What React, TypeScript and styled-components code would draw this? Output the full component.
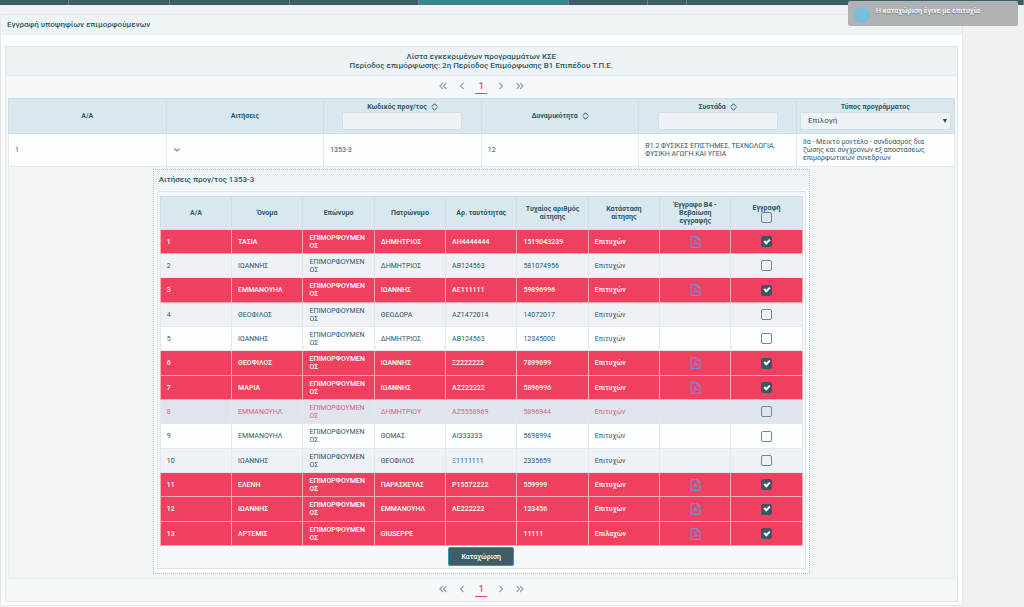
import React, { useState } from "react";
import styled, { createGlobalStyle, css } from "styled-components";

const ink = "#2b5a68";
const pink = "#f04060";

const GlobalStyle = createGlobalStyle`
  *, *::before, *::after { box-sizing: border-box; }
  body {
    margin: 0;
    background: #f0f1f5;
    color: ${ink};
    font-family: Roboto, "Open Sans", "Liberation Sans", sans-serif;
    font-size: 7px;
    line-height: 8px;
  }
  input, select, button { font-family: inherit; color: inherit; }
`;

const MenuBar = styled.nav`
  display: flex;
  height: 5px;
  background: #3f5d66;
`;

const MenuItem = styled.a<{ $grow: number; $active?: boolean }>`
  flex: ${(p) => p.$grow} 1 0;
  border-right: 1px solid #6a838b;
  background: ${(p) => (p.$active ? "#38878f" : "transparent")};
`;

const Toast = styled.div`
  position: fixed;
  top: 1px;
  right: 6px;
  z-index: 2;
  display: flex;
  gap: 6px;
  width: 170px;
  height: 25px;
  padding: 6px;
  border-radius: 2px;
  background: #b0b1b3;
  color: #fff;
  text-shadow: 0 1px 1px #777;
  font-weight: 500;
`;

const Page = styled.main`
  width: 94%;
  margin: 9px 0 0;
  padding-bottom: 3px;
  border: 1px solid #e3e8ec;
  background: #fdfefe;
`;

const PageTitle = styled.h1`
  margin: 0 0 11px;
  padding: 5px 6px;
  background: #eef3f6;
  font-size: 8px;
  line-height: 10px;
  font-weight: 500;
`;

const List = styled.section`
  margin: 0 4px;
  border: 1px solid #dde5ea;
  background: #f6f9fc;
`;

const ListTitle = styled.h2`
  margin: 0;
  padding: 5px;
  border-bottom: 1px solid #e4eaee;
  background: #edf2f5;
  font-size: 8px;
  line-height: 9px;
  font-weight: 500;
  text-align: center;
`;

const PagerBar = styled.nav`
  display: flex;
  justify-content: center;
  align-items: center;
  height: 22px;
  padding-bottom: 2px;
`;

const PagerButton = styled.button<{ $current?: boolean }>`
  display: grid;
  place-items: center;
  width: 19px;
  height: 15px;
  padding: 0;
  border: 0;
  background: none;
  color: #8fa3a9;
  font-size: 9px;
  ${(p) =>
    p.$current &&
    css`
      width: 12px;
      margin: 0 4px;
      border-bottom: 1px solid ${pink};
      color: ${pink};
      font-weight: 500;
    `}
`;

const Grid = styled.table`
  width: 100%;
  table-layout: fixed;
  border-collapse: collapse;
`;

const Outer = styled.div`
  padding: 0 2px;
`;

const Head = styled.th<{ $compact?: boolean }>`
  height: ${(p) => (p.$compact ? 33 : 35)}px;
  padding: 0 ${(p) => (p.$compact ? 6 : 3)}px;
  border: 1px solid #cfdfe6;
  background: #d9e7ef;
  font-weight: 700;
  text-align: center;
`;

const HeadLabel = styled.label`
  display: flex;
  justify-content: center;
  align-items: center;
  gap: 4px;
`;

const FilterInput = styled.input`
  width: 120px;
  max-width: 100%;
  height: 18px;
  margin-top: 1px;
  border: 1px solid #d3dfe6;
  background: #eef2f6;
`;

const SelectBox = styled.div`
  position: relative;
  margin-top: 1px;
  &::after {
    content: "";
    position: absolute;
    top: 7px;
    right: 4px;
    border: 2px solid transparent;
    border-top: 4px solid #24404a;
    border-bottom: 0;
    pointer-events: none;
  }
`;

const FilterSelect = styled.select`
  appearance: none;
  display: block;
  width: 100%;
  height: 18px;
  padding: 0 7px;
  border: 1px solid #d3dfe6;
  border-radius: 0;
  background: #eef2f6;
  font-size: 8px;
`;

const Cell = styled.td`
  height: 33px;
  padding: 0 10px 0 6px;
  border: 1px solid #e3eaee;
  background: #fdfeff;
`;

const ExpandCell = styled.td`
  padding: 2px 0 4px;
  border: 1px solid #e9eef1;
  background: #f1f5f8;
`;

const ToggleButton = styled.button`
  display: flex;
  padding: 0;
  border: 0;
  background: none;
  color: #7b8f96;
`;

const Nested = styled.section`
  width: 657px;
  max-width: 100%;
  margin: 0 auto;
  padding-bottom: 4px;
  border: 1px dotted #b0bbc0;
  background: #fcfdfe;
`;

const NestedTitle = styled.h3`
  margin: 0 0 1px;
  padding: 5px;
  background: #eef3f6;
  font-size: 8px;
  line-height: 10px;
  font-weight: 500;
`;

const NestedBody = styled.form`
  margin: 0 3px;
  padding: 4px 2px 2px;
  border: 1px solid #dde5ea;
  background: #f6f9fc;
`;

type Tone = "marked" | "plain" | "striped" | "hover";

const tones = {
  marked: css`
    --line: #f5a9b8;
    background: ${pink};
    color: #fff;
    font-weight: 500;
  `,
  plain: css`
    background: #fdfeff;
  `,
  striped: css`
    background: #eef1f6;
  `,
  hover: css`
    background: #e0e4ec;
    color: #d56583;
  `,
};

const ApplicantRow = styled.tr<{ $tone: Tone }>`
  --line: #e2e8ec;
  height: 24px;
  ${(p) => tones[p.$tone]}
  &:nth-child(3n) { height: 25px; }
`;

const ApplicantCell = styled.td<{ $center?: boolean }>`
  padding: 0 6px;
  border: 1px solid var(--line);
  text-align: ${(p) => (p.$center ? "center" : "left")};
  overflow-wrap: anywhere;
`;

const PdfLink = styled.a`
  display: flex;
  justify-content: center;
  color: #8484cc;
`;

const Check = styled.input`
  appearance: none;
  display: grid;
  place-items: center;
  width: 11px;
  height: 11px;
  margin: 0 auto;
  border: 1px solid #718791;
  border-radius: 2px;
  background: transparent;
  &:checked {
    border-color: #3f5562;
    background: #3f5562;
  }
  &:checked::after {
    content: "";
    width: 6px;
    height: 4px;
    margin-bottom: 2px;
    border-left: 2px solid #fff;
    border-bottom: 2px solid #fff;
    transform: rotate(-45deg);
  }
`;

const SubmitButton = styled.button`
  display: block;
  width: 66px;
  height: 19px;
  margin: 1px auto 0;
  padding: 0;
  border: 1px solid #1f9cc4;
  border-radius: 2px;
  background: #3f5d66;
  color: #fff;
  font-size: 7px;
  font-weight: 500;
`;

const Chevrons = ({ d }: { d: string }) => (
  <svg width="8" height="8" viewBox="0 0 8 8" fill="none" stroke="currentColor" strokeWidth="1.2" aria-hidden="true">
    <path d={d} />
  </svg>
);

const SortIcon = () => (
  <svg width="7" height="8" viewBox="0 0 7 8" fill="none" stroke="currentColor" aria-hidden="true">
    <path d="M.8 3.5 3.5.8 6.200 3.5M.8 4.500 3.5 7.200 6.200 4.500" />
  </svg>
);

const PdfIcon = () => (
  <svg width="11" height="12" viewBox="0 0 11 12" fill="none" stroke="currentColor" aria-hidden="true">
    <path d="M1 .6H7L10 3.600V11.400H1Z" strokeWidth="1.2" />
    <path d="M7 .6V3.600H10" />
    <path d="M2.700 9.600C4 8.600 5.300 6 5 4M5 4C4.800 6 6.500 7.800 8.500 7.900M3.600 8.200C5 7.500 7 7.300 8.500 7.900" />
  </svg>
);

const InfoIcon = () => (
  <svg width="16" height="16" viewBox="0 0 16 16" aria-hidden="true">
    <circle cx="8" cy="8" r="8" fill="#74c0dc" />
    <path d="M8 4v2M8 7v5" stroke="#93b8c8" strokeWidth="2" />
  </svg>
);

const Pager = ({ label }: { label: string }) => (
  <PagerBar aria-label={label}>
    <PagerButton aria-label="Πρώτη"><Chevrons d="M3.800 1 1 4l2.800 3M7.300 1 4.500 4l2.800 3" /></PagerButton>
    <PagerButton aria-label="Προηγούμενη"><Chevrons d="M5.500 1 2.500 4l3 3" /></PagerButton>
    <PagerButton $current aria-current="page">1</PagerButton>
    <PagerButton aria-label="Επόμενη"><Chevrons d="M2.500 1l3 3-3 3" /></PagerButton>
    <PagerButton aria-label="Τελευταία"><Chevrons d="M.7 1l2.800 3L.7 7M4.200 1l2.800 3-2.800 3" /></PagerButton>
  </PagerBar>
);

const menu = [
  { grow: 69 }, { grow: 100 }, { grow: 120 }, { grow: 129 },
  { grow: 150, active: true }, { grow: 79 }, { grow: 38 }, { grow: 339 },
];

interface Applicant {
  name: string;
  father: string;
  id: string;
  code: string;
  tone: Tone;
  status?: string;
}

const applicants: Applicant[] = [
  { name: "ΤΑΣΙΑ", father: "ΔΗΜΗΤΡΙΟΣ", id: "ΑΗ4444444", code: "1519043239", tone: "marked" },
  { name: "ΙΩΑΝΝΗΣ", father: "ΔΗΜΗΤΡΙΟΣ", id: "ΑΒ124563", code: "581074956", tone: "striped" },
  { name: "ΕΜΜΑΝΟΥΗΛ", father: "ΙΩΑΝΝΗΣ", id: "ΑΕ111111", code: "59896996", tone: "marked" },
  { name: "ΘΕΟΦΙΛΟΣ", father: "ΘΕΟΔΩΡΑ", id: "ΑΖ1472014", code: "14072017", tone: "striped" },
  { name: "ΙΩΑΝΝΗΣ", father: "ΔΗΜΗΤΡΙΟΣ", id: "ΑΒ124563", code: "12345000", tone: "plain" },
  { name: "ΘΕΟΦΙΛΟΣ", father: "ΙΩΑΝΝΗΣ", id: "Ξ2222222", code: "7899699", tone: "marked" },
  { name: "ΜΑΡΙΑ", father: "ΙΩΑΝΝΗΣ", id: "ΑΖ222222", code: "5896996", tone: "marked" },
  { name: "ΕΜΜΑΝΟΥΗΛ", father: "ΔΗΜΗΤΡΙΟΥ", id: "ΑΖ5558969", code: "5896944", tone: "hover" },
  { name: "ΕΜΜΑΝΟΥΗΛ", father: "ΘΩΜΑΣ", id: "ΑΙ333333", code: "5698994", tone: "plain" },
  { name: "ΙΩΑΝΝΗΣ", father: "ΘΕΟΦΙΛΟΣ", id: "Ξ1111111", code: "2335659", tone: "striped" },
  { name: "ΕΛΕΝΗ", father: "ΠΑΡΑΣΚΕΥΑΣ", id: "Ρ15572222", code: "559999", tone: "marked" },
  { name: "ΙΩΑΝΝΗΣ", father: "ΕΜΜΑΝΟΥΗΛ", id: "ΑΕ222222", code: "123456", tone: "marked" },
  { name: "ΑΡΤΕΜΙΣ", father: "GIUSEPPE", id: "", code: "11111", tone: "marked", status: "Επιλαχών" },
];

const applicantHeads = [
  "Α/Α", "Όνομα", "Επώνυμο", "Πατρώνυμο", "Αρ. ταυτότητας",
  "Τυχαίος αριθμός αίτησης", "Κατάσταση αίτησης", "Έγγραφο Β4 - Βεβαίωση εγγραφής",
];

const Applicants = () => (
  <Nested>
    <NestedTitle>Αιτήσεις προγ/τος 1353-3</NestedTitle>
    <NestedBody onSubmit={(e: React.FormEvent) => e.preventDefault()}>
      <Grid>
        <thead>
          <tr>
            {applicantHeads.map((h) => <Head $compact key={h}>{h}</Head>)}
            <Head $compact>
              <label htmlFor="enrol-all">Εγγραφή</label>
              <Check type="checkbox" id="enrol-all" />
            </Head>
          </tr>
        </thead>
        <tbody>
          {applicants.map((a, i) => (
            <ApplicantRow key={i} $tone={a.tone}>
              <ApplicantCell>{i + 1}</ApplicantCell>
              <ApplicantCell>{a.name}</ApplicantCell>
              <ApplicantCell>ΕΠΙΜΟΡΦΟΥΜΕΝΟΣ</ApplicantCell>
              <ApplicantCell>{a.father}</ApplicantCell>
              <ApplicantCell>{a.id}</ApplicantCell>
              <ApplicantCell>{a.code}</ApplicantCell>
              <ApplicantCell>{a.status ?? "Επιτυχών"}</ApplicantCell>
              <ApplicantCell $center>
                {a.tone === "marked" && <PdfLink href="#pdf" aria-label="Βεβαίωση"><PdfIcon /></PdfLink>}
              </ApplicantCell>
              <ApplicantCell $center>
                <Check type="checkbox" aria-label="Εγγραφή" defaultChecked={a.tone === "marked"} />
              </ApplicantCell>
            </ApplicantRow>
          ))}
        </tbody>
      </Grid>
      <SubmitButton type="submit">Καταχώριση</SubmitButton>
    </NestedBody>
  </Nested>
);

export default function App() {
  const [open, setOpen] = useState(true);
  return (
    <>
      <GlobalStyle />
      <MenuBar>
        {menu.map((m, i) => <MenuItem key={i} href="#menu" $grow={m.grow} $active={m.active} />)}
      </MenuBar>
      <Toast role="status">
        <InfoIcon />
        <span>Η καταχώριση έγινε με επιτυχία</span>
      </Toast>
      <Page>
        <PageTitle>Εγγραφή υποψηφίων επιμορφούμενων</PageTitle>
        <List>
          <ListTitle>
            Λίστα εγκεκριμένων προγραμμάτων ΚΣΕ
            <br />
            Περίοδος επιμόρφωσης: 2η Περίοδος Επιμόρφωσης Β1 Επιπέδου Τ.Π.Ε.
          </ListTitle>
          <Pager label="Σελίδες επάνω" />
          <Outer>
            <Grid>
              <thead>
                <tr>
                  <Head>Α/Α</Head>
                  <Head>Αιτήσεις</Head>
                  <Head>
                    <HeadLabel htmlFor="code">Κωδικός προγ/τος <SortIcon /></HeadLabel>
                    <FilterInput id="code" />
                  </Head>
                  <Head><HeadLabel as="span">Δυναμικότητα <SortIcon /></HeadLabel></Head>
                  <Head>
                    <HeadLabel htmlFor="cluster">Συστάδα <SortIcon /></HeadLabel>
                    <FilterInput id="cluster" />
                  </Head>
                  <Head>
                    <HeadLabel htmlFor="kind">Τύπος προγράμματος</HeadLabel>
                    <SelectBox>
                      <FilterSelect id="kind"><option>Επιλογή</option></FilterSelect>
                    </SelectBox>
                  </Head>
                </tr>
              </thead>
              <tbody>
                <tr>
                  <Cell>1</Cell>
                  <Cell>
                    <ToggleButton aria-label="Αιτήσεις" aria-expanded={open} onClick={() => setOpen(!open)}>
                      <Chevrons d="M1.200 2.500 4 5 6.800 2.500" />
                    </ToggleButton>
                  </Cell>
                  <Cell>1353-3</Cell>
                  <Cell>12</Cell>
                  <Cell>Β1.2 ΦΥΣΙΚΕΣ ΕΠΙΣΤΗΜΕΣ, ΤΕΧΝΟΛΟΓΙΑ, ΦΥΣΙΚΗ ΑΓΩΓΗ ΚΑΙ ΥΓΕΙΑ</Cell>
                  <Cell>ΙΙα - Μεικτό μοντέλο - συνδυασμός δια ζώσης και σύγχρονων εξ αποστάσεως επιμορφωτικών συνεδριών</Cell>
                </tr>
                {open && (
                  <tr>
                    <ExpandCell colSpan={6}><Applicants /></ExpandCell>
                  </tr>
                )}
              </tbody>
            </Grid>
          </Outer>
          <Pager label="Σελίδες κάτω" />
        </List>
      </Page>
    </>
  );
}
